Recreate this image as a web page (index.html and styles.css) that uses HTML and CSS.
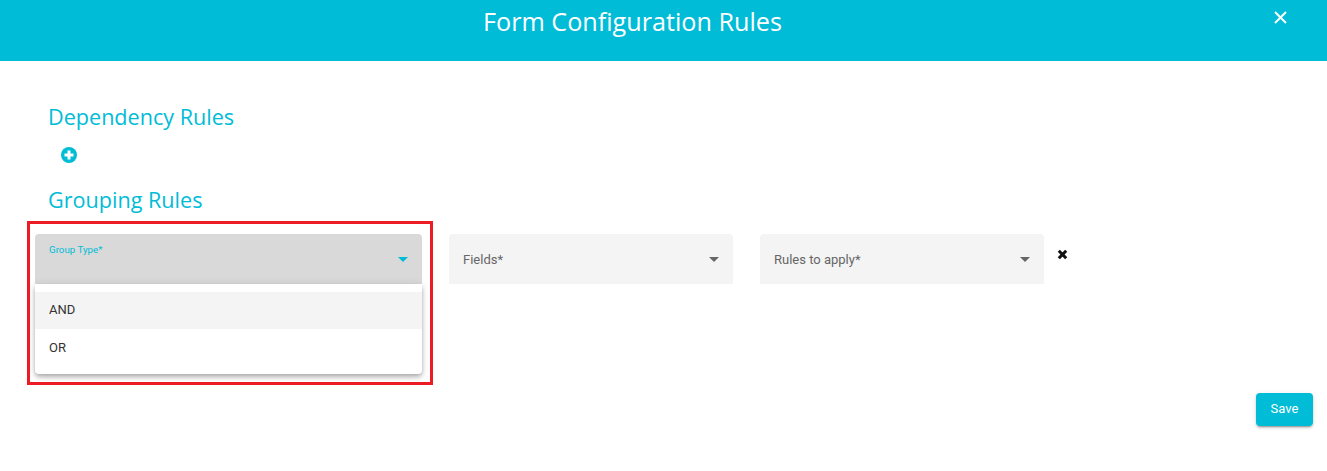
FILE: index.html
```html
<!DOCTYPE html>
<html lang="en">
<head>
<meta charset="utf-8">
<title>Form Configuration Rules</title>
<link rel="stylesheet" href="styles.css">
</head>
<body>
<header class="header">
  <h1 class="title">Form Configuration Rules</h1>
  <button class="close" aria-label="Close">
    <svg width="13" height="13" viewBox="0 0 13 13"><path d="M1 1l11 11M12 1L1 12" stroke="#fff" stroke-width="2" fill="none"/></svg>
  </button>
</header>
<main class="content">
  <h2 class="section-title">Dependency Rules</h2>
  <div class="add-row">
    <svg width="16" height="16" viewBox="0 0 16 16"><circle cx="8" cy="8" r="8" fill="#00bcd4"/><path d="M8 3.5v9M3.5 8h9" stroke="#fff" stroke-width="3"/></svg>
  </div>
  <h2 class="section-title">Grouping Rules</h2>
  <div class="rules-row">
    <div class="field field-group">
      <span class="float-label">Group Type*</span>
      <span class="arrow arrow-active"></span>
      <div class="menu">
        <div class="option active">AND</div>
        <div class="option">OR</div>
      </div>
      <div class="highlight"></div>
    </div>
    <div class="field field-small">
      <span class="label">Fields*</span>
      <span class="arrow"></span>
    </div>
    <div class="field field-small">
      <span class="label">Rules to apply*</span>
      <span class="arrow"></span>
    </div>
    <svg class="remove" width="11" height="11" viewBox="0 0 11 11"><path d="M1.8 1.8l7.4 7.4M9.2 1.8L1.8 9.2" stroke="#111" stroke-width="3" fill="none"/></svg>
  </div>
  <div class="actions">
    <button class="save">Save</button>
  </div>
</main>
</body>
</html>
```
FILE: styles.css
```css
* { box-sizing: border-box; }
html, body { margin: 0; height: 100%; background: #fff; overflow: hidden; }
body { font-family: Roboto, sans-serif; }
.header {
  position: relative;
  height: 61px;
  background: #00bcd7;
  display: flex;
  justify-content: center;
  padding-right: 62px;
}
.title {
  margin: 4px 0 0;
  font: 400 25.2px/35px "Open Sans", sans-serif;
  color: #fff;
}
.close {
  position: absolute;
  top: 11px;
  right: 40px;
  padding: 0;
  border: 0;
  background: none;
  display: flex;
}
.content { padding: 41px 14px 0 35px; }
.section-title {
  margin: 0 0 0 13px;
  font: 400 21.6px/30px "Open Sans", sans-serif;
  color: #00bcd7;
}
.add-row { height: 53px; padding: 15px 0 0 26px; display: flex; align-items: flex-start; }
.rules-row { display: flex; align-items: flex-start; margin-top: 19px; }
.field {
  position: relative;
  height: 50px;
  background: #f4f4f4;
  border-radius: 4px 4px 0 0;
  margin-right: 27px;
  flex: none;
}
.field-group { width: 387px; background: #d9d9d9; }
.field-small { width: 284px; padding: 18px 14px 0; }
.label { font-size: 13px; line-height: 16px; color: #666; display: block; }
.float-label {
  position: absolute;
  left: 14px;
  top: 10px;
  font-size: 9.75px;
  line-height: 12px;
  color: #00bcd7;
}
.arrow {
  position: absolute;
  right: 14px;
  top: 23px;
  width: 0;
  height: 0;
  border-left: 5px solid transparent;
  border-right: 5px solid transparent;
  border-top: 5px solid #666;
}
.arrow-active { border-top-color: #00bcd7; }
.menu {
  position: absolute;
  left: 0;
  right: 0;
  top: 50px;
  height: 90px;
  padding: 8px 0;
  background: #fff;
  border-radius: 0 0 4px 4px;
  box-shadow: 0 2px 4px -1px rgba(0,0,0,.2), 0 4px 5px 0 rgba(0,0,0,.14), 0 1px 10px 0 rgba(0,0,0,.12);
}
.option {
  height: 37px;
  padding-left: 14px;
  font-size: 13px;
  line-height: 37px;
  color: #333;
}
.option.active { background: #f4f4f4; line-height: 35px; }
.highlight {
  position: absolute;
  left: -8px;
  top: -13px;
  width: 406px;
  height: 164px;
  border: 3px solid #ed1c24;
  pointer-events: none;
}
.remove { margin: 15px 0 0 -14px; }
.actions { display: flex; justify-content: flex-end; margin-top: 109px; }
.save {
  width: 57px;
  height: 33px;
  padding: 0 0 2px;
  border: 0;
  border-radius: 4px;
  background: #00bcd7;
  color: #fff;
  font: 400 13px Roboto, sans-serif;
  box-shadow: 0 3px 1px -2px rgba(0,0,0,.2), 0 2px 2px 0 rgba(0,0,0,.14), 0 1px 5px 0 rgba(0,0,0,.12);
}
```
